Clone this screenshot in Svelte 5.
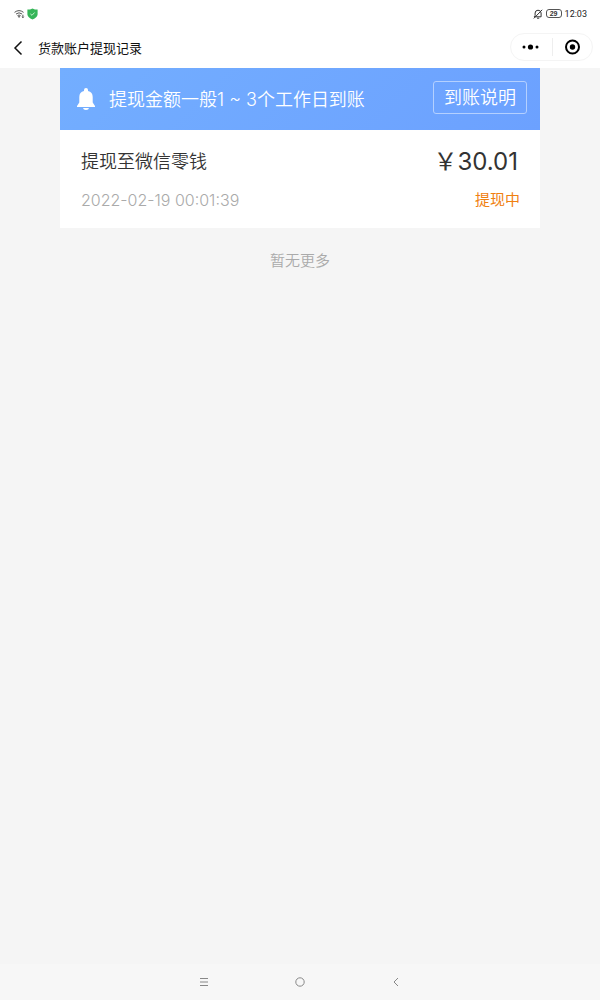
<script lang="ts">
	type Withdrawal = {
		id: number;
		title: string;
		time: string;
		amount: string;
		status: string;
	};

	let time = '12:03';
	let battery = 29;
	let records: Withdrawal[] = [
		{
			id: 1,
			title: '提现至微信零钱',
			time: '2022-02-19 00:01:39',
			amount: '30.01',
			status: '提现中'
		}
	];
</script>

<div class="screen">
	<header>
		<div class="status-bar">
			<div class="status-group">
				<svg class="wifi" viewBox="0 0 12 10" aria-hidden="true">
					<path d="M.6 3.2Q5.5-.6 10.4 3.2M2.2 5Q5.5 2.4 8.8 5M3.8 6.8Q5.5 5.4 7.2 6.8" />
					<circle cx="5.5" cy="8" r=".6" />
					<path d="M9.7 5.8v3.2M8.8 8l.9 1 .9-1" />
				</svg>
				<svg class="shield" viewBox="0 0 11 12" aria-hidden="true">
					<path d="M5.5.4Q7.8 1.6 10.6 1.6v5Q10.2 9.8 5.5 11.6.8 9.8.4 6.6v-5Q3.2 1.6 5.5.4Z" fill="#35b558" />
					<path d="m3.4 5.9 1.6 1.4 2.6-2.8" fill="none" stroke="#c4f0cd" stroke-width="1" />
				</svg>
			</div>
			<div class="status-group right">
				<svg class="mute" viewBox="0 0 10 10" aria-hidden="true">
					<path d="M1.2 7.8h6.9V4Q8 1.3 5 1.2 2.2 1.3 2.1 4v2.5L1.2 7.8M4 9.2h2.2M.8 9.4 9.2.8" />
				</svg>
				<span class="battery">{battery}</span>
				<span class="clock">{time}</span>
			</div>
		</div>

		<div class="nav-bar">
			<button class="back" aria-label="返回">
				<svg viewBox="0 0 10 16" aria-hidden="true">
					<path d="M8.5 1.5 2 8l6.5 6.5" />
				</svg>
			</button>
			<h1>货款账户提现记录</h1>
			<div class="capsule">
				<button aria-label="更多">
					<svg class="dots" viewBox="0 0 18 8" aria-hidden="true">
						<circle cx="2" cy="4" r="1.5" />
						<circle cx="8.5" cy="4" r="2.6" />
						<circle cx="15" cy="4" r="1.5" />
					</svg>
				</button>
				<button aria-label="关闭">
					<svg class="target" viewBox="0 0 16 16" aria-hidden="true">
						<circle cx="8.5" cy="8" r="6.5" fill="none" stroke="#000" stroke-width="2" />
						<circle cx="8.5" cy="8" r="2.7" />
					</svg>
				</button>
			</div>
		</div>
	</header>

	<main>
		<section class="notice">
			<svg class="bell" viewBox="0 0 20 24" aria-hidden="true">
				<path d="M8 3Q8 1 10 1t2 2v1Q16.7 5.2 16.7 10v5.5L19 19v1H1v-1l2.3-3.5V10Q3.3 5.2 8 4ZM7 21h6q-.3 2-3 2t-3-2Z" />
			</svg>
			<p>提现金额一般1 ~ 3个工作日到账</p>
			<button>到账说明</button>
		</section>

		<ul class="records">
			{#each records as record (record.id)}
				<li>
					<div class="row">
						<span class="title">{record.title}</span>
						<span class="amount">￥{record.amount}</span>
					</div>
					<div class="row">
						<time>{record.time}</time>
						<span class="state">{record.status}</span>
					</div>
				</li>
			{/each}
		</ul>

		<p class="end">暂无更多</p>
	</main>

	<nav class="system-nav">
		<button aria-label="最近任务">
			<svg viewBox="0 0 10 10" aria-hidden="true"><path d="M1 1.5h8M1 5h8M1 8.5h8" /></svg>
		</button>
		<button aria-label="主页">
			<svg viewBox="0 0 10 10" aria-hidden="true"><circle cx="5" cy="5" r="4.2" /></svg>
		</button>
		<button aria-label="返回上一级">
			<svg viewBox="0 0 10 10" aria-hidden="true"><path d="M7 1 3 5l4 4" /></svg>
		</button>
	</nav>
</div>

<style>
	:global(body) {
		margin: 0;
		background: #f5f5f5;
	}

	.screen {
		display: flex;
		flex-direction: column;
		min-height: 100vh;
		font-family: Inter, 'Noto Sans CJK SC', sans-serif;
		color: #333;
	}

	button {
		display: flex;
		align-items: center;
		justify-content: center;
		padding: 0;
		border: 0;
		background: none;
		font: inherit;
		color: inherit;
		cursor: pointer;
	}

	h1,
	p,
	ul {
		margin: 0;
		padding: 0;
	}

	svg {
		display: block;
		flex: none;
	}

	header {
		background: #fff;
	}

	.status-bar {
		display: flex;
		align-items: center;
		justify-content: space-between;
		height: 27px;
		padding: 0 13px 0 14px;
	}

	.status-group {
		display: flex;
		align-items: center;
		gap: 2px;
	}

	.status-group.right {
		gap: 3px;
	}

	.wifi {
		width: 11px;
		height: 10px;
		fill: none;
		stroke: #444;
		stroke-width: 1;
	}

	.shield {
		width: 11px;
		height: 12px;
	}

	.mute {
		width: 10px;
		height: 10px;
		fill: none;
		stroke: #333;
		stroke-width: 1;
	}

	.battery {
		box-sizing: border-box;
		width: 16px;
		height: 9px;
		border: 1px solid #555;
		border-radius: 3px;
		font: bold 7px/7px 'Liberation Sans', sans-serif;
		text-align: center;
	}

	.clock {
		font: 9px/12px Roboto, sans-serif;
		color: #222;
	}

	.nav-bar {
		display: flex;
		align-items: center;
		height: 41px;
		padding: 0 7px 0 13px;
	}

	.back svg {
		width: 10px;
		height: 16px;
		fill: none;
		stroke: #111;
		stroke-width: 1.5;
	}

	h1 {
		flex: 1;
		padding-left: 15px;
		font-size: 13px;
		line-height: 20px;
		font-weight: 400;
		color: #111;
	}

	.capsule {
		box-sizing: border-box;
		display: flex;
		width: 83px;
		height: 28px;
		margin-bottom: 1px;
		border: 1px solid #f4f4f4;
		border-radius: 14px;
	}

	.capsule button {
		flex: 1;
	}

	.capsule button + button {
		background: linear-gradient(#eee, #eee) left center / 1px 18px no-repeat;
	}

	.dots {
		width: 18px;
		height: 8px;
	}

	.target {
		width: 16px;
		height: 16px;
	}

	main {
		flex: 1;
		width: 80%;
		margin: 0 auto;
	}

	.notice {
		display: flex;
		align-items: center;
		box-sizing: border-box;
		height: 62px;
		padding: 0 13px 0 16px;
		background: linear-gradient(135deg, #73aeff, #6ca1ff);
		color: #fff;
		font-size: 18px;
		line-height: 28px;
		font-weight: 350;
	}

	.bell {
		width: 20px;
		height: 24px;
		fill: #fff;
	}

	.notice p {
		flex: 1;
		padding: 2px 0 0 13px;
	}

	.notice button {
		box-sizing: border-box;
		width: 94px;
		height: 33px;
		margin-bottom: 3px;
		border: 1px solid #b4d0ff;
		border-radius: 3px;
	}

	.records {
		list-style: none;
	}

	.records li {
		display: flex;
		flex-direction: column;
		gap: 8px;
		padding: 17px 20px 13px 21px;
		background: #fff;
	}

	.row {
		display: flex;
		align-items: center;
		justify-content: space-between;
		line-height: 30px;
	}

	.title {
		font-size: 18px;
		font-weight: 350;
	}

	.amount {
		padding-right: 2px;
		font-size: 24px;
	}

	time {
		font-size: 16px;
		font-weight: 350;
		color: #aaa;
	}

	.state {
		font-size: 15px;
		color: #f08010;
	}

	.end {
		padding-top: 21px;
		font-size: 15px;
		line-height: 24px;
		font-weight: 350;
		text-align: center;
		color: #aaa;
	}

	.system-nav {
		display: flex;
		justify-content: center;
		gap: 86px;
		height: 36px;
		background: #f7f7f7;
	}

	.system-nav svg {
		width: 10px;
		height: 10px;
		fill: none;
		stroke: #888;
		stroke-width: 1;
	}
</style>
